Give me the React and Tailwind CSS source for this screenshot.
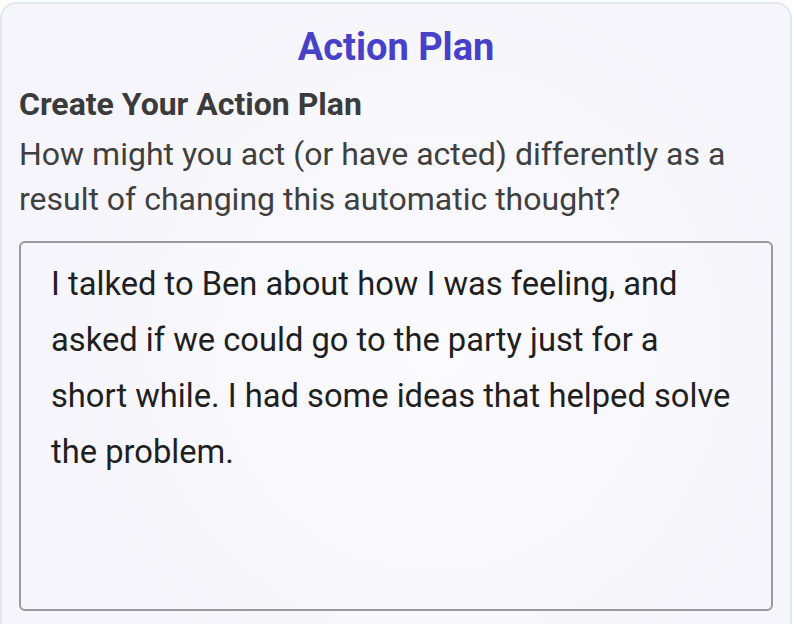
export default function App() {
  return (
    <div className="w-[794px] h-[624px] overflow-hidden bg-white" style={{ fontFamily: "Roboto, 'Noto Sans', sans-serif" }}>
      <div className="mt-[2px] w-[792px] h-[640px] rounded-2xl border-2 border-[#e2e8f0] bg-[#f6f6fc] bg-[radial-gradient(circle_at_55%_55%,#fbfbfe_0%,#f5f5fb_70%)] px-[17px] pt-[19px]">
        <h1 className="text-center text-[38px] leading-[48px] font-bold text-[#4741c9]">Action Plan</h1>
        <h2 className="mt-[13px] text-[32px] leading-[40px] font-bold text-[#3b3b3b]">Create Your Action Plan</h2>
        <p className="mt-[8px] text-[32px] leading-[45px] text-[#3f3f3f]">
          How might you act (or have acted) differently as a result of changing this automatic thought?
        </p>
        <div className="mt-[19px] h-[370px] w-[754px] rounded-[6px] border-2 border-[#9a9a9e] pl-[30px] pr-[36px] pt-[13px] text-[32.7px] leading-[56px] text-[#1f1f1f]">
          I talked to Ben about how I was feeling, and asked if we could go to the party just for a short while. I had some ideas that helped solve the problem.
        </div>
      </div>
    </div>
  );
}
